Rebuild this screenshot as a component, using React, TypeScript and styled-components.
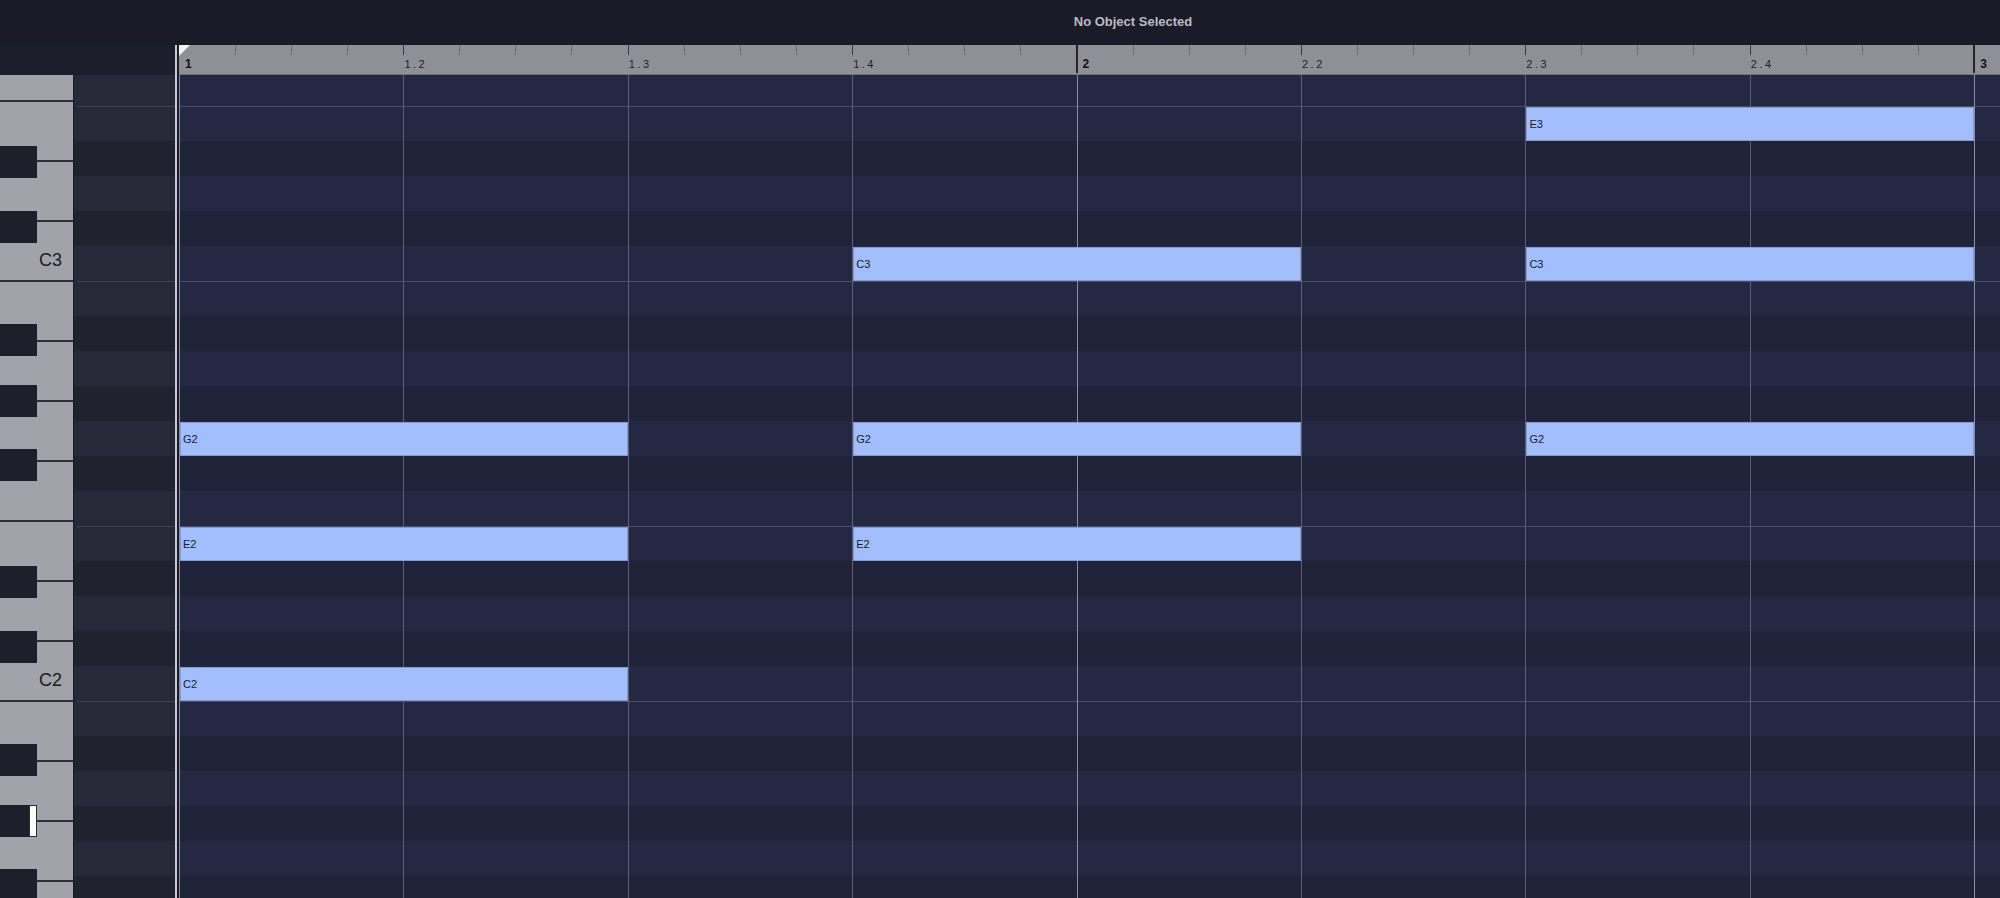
import React from "react";
import styled, { createGlobalStyle } from "styled-components";

const BEAT = 224.4;
const ROW = 35;
const TOP_NOTE = 53; // F3, first visible lane
const LOW_NOTE = 30; // F#1, last visible lane
const BLACK = [1, 3, 6, 8, 10];

type Note = { pitch: number; name: string; start: number; len: number };

const notes: Note[] = [
  { pitch: 52, name: "E3", start: 6, len: 2 },
  { pitch: 48, name: "C3", start: 3, len: 2 },
  { pitch: 48, name: "C3", start: 6, len: 2 },
  { pitch: 43, name: "G2", start: 0, len: 2 },
  { pitch: 43, name: "G2", start: 3, len: 2 },
  { pitch: 43, name: "G2", start: 6, len: 2 },
  { pitch: 40, name: "E2", start: 0, len: 2 },
  { pitch: 40, name: "E2", start: 3, len: 2 },
  { pitch: 36, name: "C2", start: 0, len: 2 },
];

const beats = [
  { label: "1", bar: true },
  { label: "1.2", bar: false },
  { label: "1.3", bar: false },
  { label: "1.4", bar: false },
  { label: "2", bar: true },
  { label: "2.2", bar: false },
  { label: "2.3", bar: false },
  { label: "2.4", bar: false },
];

// white keys top to bottom inside one octave, line under F and C runs full width
const whiteKeys = ["B", "A", "G", "F", "E", "D", "C"];
const blackKeyTops = [43, 104, 168, 285, 350]; // A#, G#, F#, D#, C#

// only the labels that fall inside the visible keyboard are printed
const octaves = [
  { id: "o3", label: "C3" },
  { id: "o2", label: "C2" },
  { id: "o1", label: "" },
];

const lanes: number[] = [];
for (let n = TOP_NOTE; n >= LOW_NOTE; n--) lanes.push(n);

const GlobalStyle = createGlobalStyle`
  html, body {
    margin: 0;
    padding: 0;
    background: #1b1a27;
  }
  body {
    width: 2000px;
    height: 898px;
    overflow: hidden;
    font-family: "Liberation Sans", Arial, sans-serif;
  }
`;

const Window = styled.div`
  display: flex;
  flex-direction: column;
  width: 2000px;
  height: 898px;
`;

const TopBar = styled.header`
  flex: none;
  height: 45px;
  display: flex;
  align-items: center;
  justify-content: center;
  box-sizing: border-box;
  padding: 0 0 3px 266px;
  background: #1b1a27;
  color: #bcbcc4;
  font-size: 13px;
  font-weight: 700;
`;

const RulerRow = styled.div`
  flex: none;
  display: flex;
  height: 30px;
`;

const RulerCorner = styled.div`
  flex: none;
  width: 175px;
  background: #1d1e2c;
`;

const Divider = styled.div`
  flex: none;
  width: 4px;
  background: linear-gradient(to right, #c9c9d1 0 2px, #1a1b28 2px 4px);
`;

const Ruler = styled.div`
  flex: 1;
  display: flex;
  box-sizing: border-box;
  background: #8f9097;
  border-bottom: 1px solid #6f7078;
`;

const sixteenths = `linear-gradient(to right,
  transparent 55.6px, #6c6d74 55.6px, #6c6d74 56.6px, transparent 56.6px,
  transparent 111.7px, #6c6d74 111.7px, #6c6d74 112.7px, transparent 112.7px,
  transparent 167.8px, #6c6d74 167.8px, #6c6d74 168.8px, transparent 168.8px)`;

const RulerCell = styled.div<{ $bar: boolean; $first?: boolean; $last?: boolean }>`
  position: relative;
  flex: ${(p) => (p.$last ? "1" : "none")};
  width: ${(p) => (p.$last ? "auto" : `${BEAT}px`)};
  display: flex;
  align-items: flex-end;
  box-sizing: border-box;
  padding: 0 0 4px ${(p) => (p.$bar ? 6 : 1)}px;
  background-image: ${(p) => (p.$last ? "none" : sixteenths)};
  background-size: 100% 10px;
  background-repeat: no-repeat;
  color: ${(p) => (p.$bar ? "#111115" : "#1e1e23")};
  font-size: ${(p) => (p.$bar ? 12 : 11)}px;
  font-weight: ${(p) => (p.$bar ? 700 : 400)};
  letter-spacing: ${(p) => (p.$bar ? 0 : 2.5)}px;
  line-height: 1;

  &::before {
    content: "";
    position: absolute;
    top: 0;
    left: ${(p) => (p.$bar ? -1 : 0)}px;
    width: ${(p) => (p.$bar ? 2 : 1)}px;
    height: ${(p) => (p.$bar ? 28 : 10)}px;
    background: ${(p) => (p.$bar ? "#24242a" : "#3a3b41")};
    display: ${(p) => (p.$first ? "none" : "block")};
  }

  &::after {
    content: "";
    position: absolute;
    top: 0;
    left: 0;
    border-top: 11px solid #f4f4f6;
    border-right: 11px solid transparent;
    display: ${(p) => (p.$first ? "block" : "none")};
  }
`;

const Main = styled.div`
  flex: 1;
  display: flex;
  min-height: 0;
`;

const Keyboard = styled.div`
  flex: none;
  width: 73px;
  overflow: hidden;
  background: #a2a2aa;
`;

const KeyStack = styled.div`
  margin-top: -214px;
`;

const Octave = styled.div`
  position: relative;
  height: 420px;
`;

const WhiteKey = styled.div<{ $full: boolean }>`
  position: relative;
  height: 60px;
  display: flex;
  justify-content: flex-end;
  align-items: flex-end;
  box-sizing: border-box;
  padding: 0 11px 12px 0;
  color: #1b1b22;
  font-size: 18px;
  line-height: 1;

  &::after {
    content: "";
    position: absolute;
    bottom: -1px;
    right: 0;
    left: ${(p) => (p.$full ? 0 : 37)}px;
    height: 2px;
    background: #2e2f38;
  }
`;

const BlackKey = styled.div<{ $top: number }>`
  position: absolute;
  left: 0;
  top: ${(p) => p.$top}px;
  width: 37px;
  height: 32px;
  background: #1e1f2b;
  z-index: 1;
`;

const PressMark = styled.div`
  position: absolute;
  top: 0;
  right: 0;
  bottom: 0;
  width: 8px;
  box-sizing: border-box;
  background: #ffffff;
  border: 1px solid #2a2b36;
`;

const Strip = styled.div`
  flex: none;
  width: 102px;
  overflow: hidden;
  box-sizing: border-box;
  border-left: 1px solid #1a1b26;
`;

const LaneStack = styled.div`
  margin-top: -4px;
`;

const StripLane = styled.div<{ $black: boolean; $line: boolean }>`
  position: relative;
  height: ${ROW}px;
  background: ${(p) => (p.$black ? "#212230" : "#272838")};

  &::before {
    content: "";
    position: absolute;
    top: 0;
    left: 3px;
    right: 0;
    height: 1px;
    background: #41425a;
    display: ${(p) => (p.$line ? "block" : "none")};
  }
`;

const GridArea = styled.div`
  position: relative;
  flex: 1;
  overflow: hidden;
`;

const GridLane = styled.div<{ $black: boolean; $line: boolean }>`
  position: relative;
  height: ${ROW}px;
  background: ${(p) => (p.$black ? "#20223a" : "#252843")};

  &::before {
    content: "";
    position: absolute;
    top: 0;
    left: 0;
    right: 0;
    height: 1px;
    background: #4a4d69;
    display: ${(p) => (p.$line ? "block" : "none")};
  }
`;

const BeatLines = styled.div`
  position: absolute;
  inset: 0;
  pointer-events: none;
  background-image:
    repeating-linear-gradient(to right, #8a8da7 0 1px, transparent 1px ${BEAT * 4}px),
    repeating-linear-gradient(to right, #5b5e7b 0 1px, transparent 1px ${BEAT}px);
`;

const NoteBlock = styled.div`
  position: absolute;
  height: 34px;
  display: flex;
  align-items: center;
  box-sizing: border-box;
  padding-left: 3px;
  background: #a3befd;
  box-shadow: inset 0 0 0 1px #8799cf;
  color: #161a35;
  font-size: 11px;
`;

const isBlack = (n: number) => BLACK.includes(n % 12);
const hasLine = (n: number) => n % 12 === 4 || n % 12 === 11;

export default function App() {
  return (
    <Window>
      <GlobalStyle />
      <TopBar>No Object Selected</TopBar>

      <RulerRow>
        <RulerCorner />
        <Divider />
        <Ruler>
          {beats.map((b, i) => (
            <RulerCell key={b.label} $bar={b.bar} $first={i === 0}>
              {b.label}
            </RulerCell>
          ))}
          <RulerCell $bar $last>
            3
          </RulerCell>
        </Ruler>
      </RulerRow>

      <Main>
        <Keyboard>
          <KeyStack>
            {octaves.map((o) => (
              <Octave key={o.id}>
                {whiteKeys.map((k) => (
                  <WhiteKey key={k} $full={k === "F" || k === "C"}>
                    {k === "C" && o.label ? o.label : null}
                  </WhiteKey>
                ))}
                {blackKeyTops.map((top, i) => (
                  <BlackKey key={top} $top={top}>
                    {o.id === "o1" && i === 1 ? <PressMark /> : null}
                  </BlackKey>
                ))}
              </Octave>
            ))}
          </KeyStack>
        </Keyboard>

        <Strip>
          <LaneStack>
            {lanes.map((n) => (
              <StripLane key={n} $black={isBlack(n)} $line={hasLine(n)} />
            ))}
          </LaneStack>
        </Strip>

        <Divider />

        <GridArea>
          <LaneStack>
            {lanes.map((n) => (
              <GridLane key={n} $black={isBlack(n)} $line={hasLine(n)} />
            ))}
          </LaneStack>
          <BeatLines />
          {notes.map((note) => (
            <NoteBlock
              key={`${note.name}-${note.start}`}
              style={{
                left: note.start * BEAT + 1,
                width: note.len * BEAT - 1,
                top: (TOP_NOTE - note.pitch) * ROW - 4 + 1,
              }}
            >
              {note.name}
            </NoteBlock>
          ))}
        </GridArea>
      </Main>
    </Window>
  );
}
